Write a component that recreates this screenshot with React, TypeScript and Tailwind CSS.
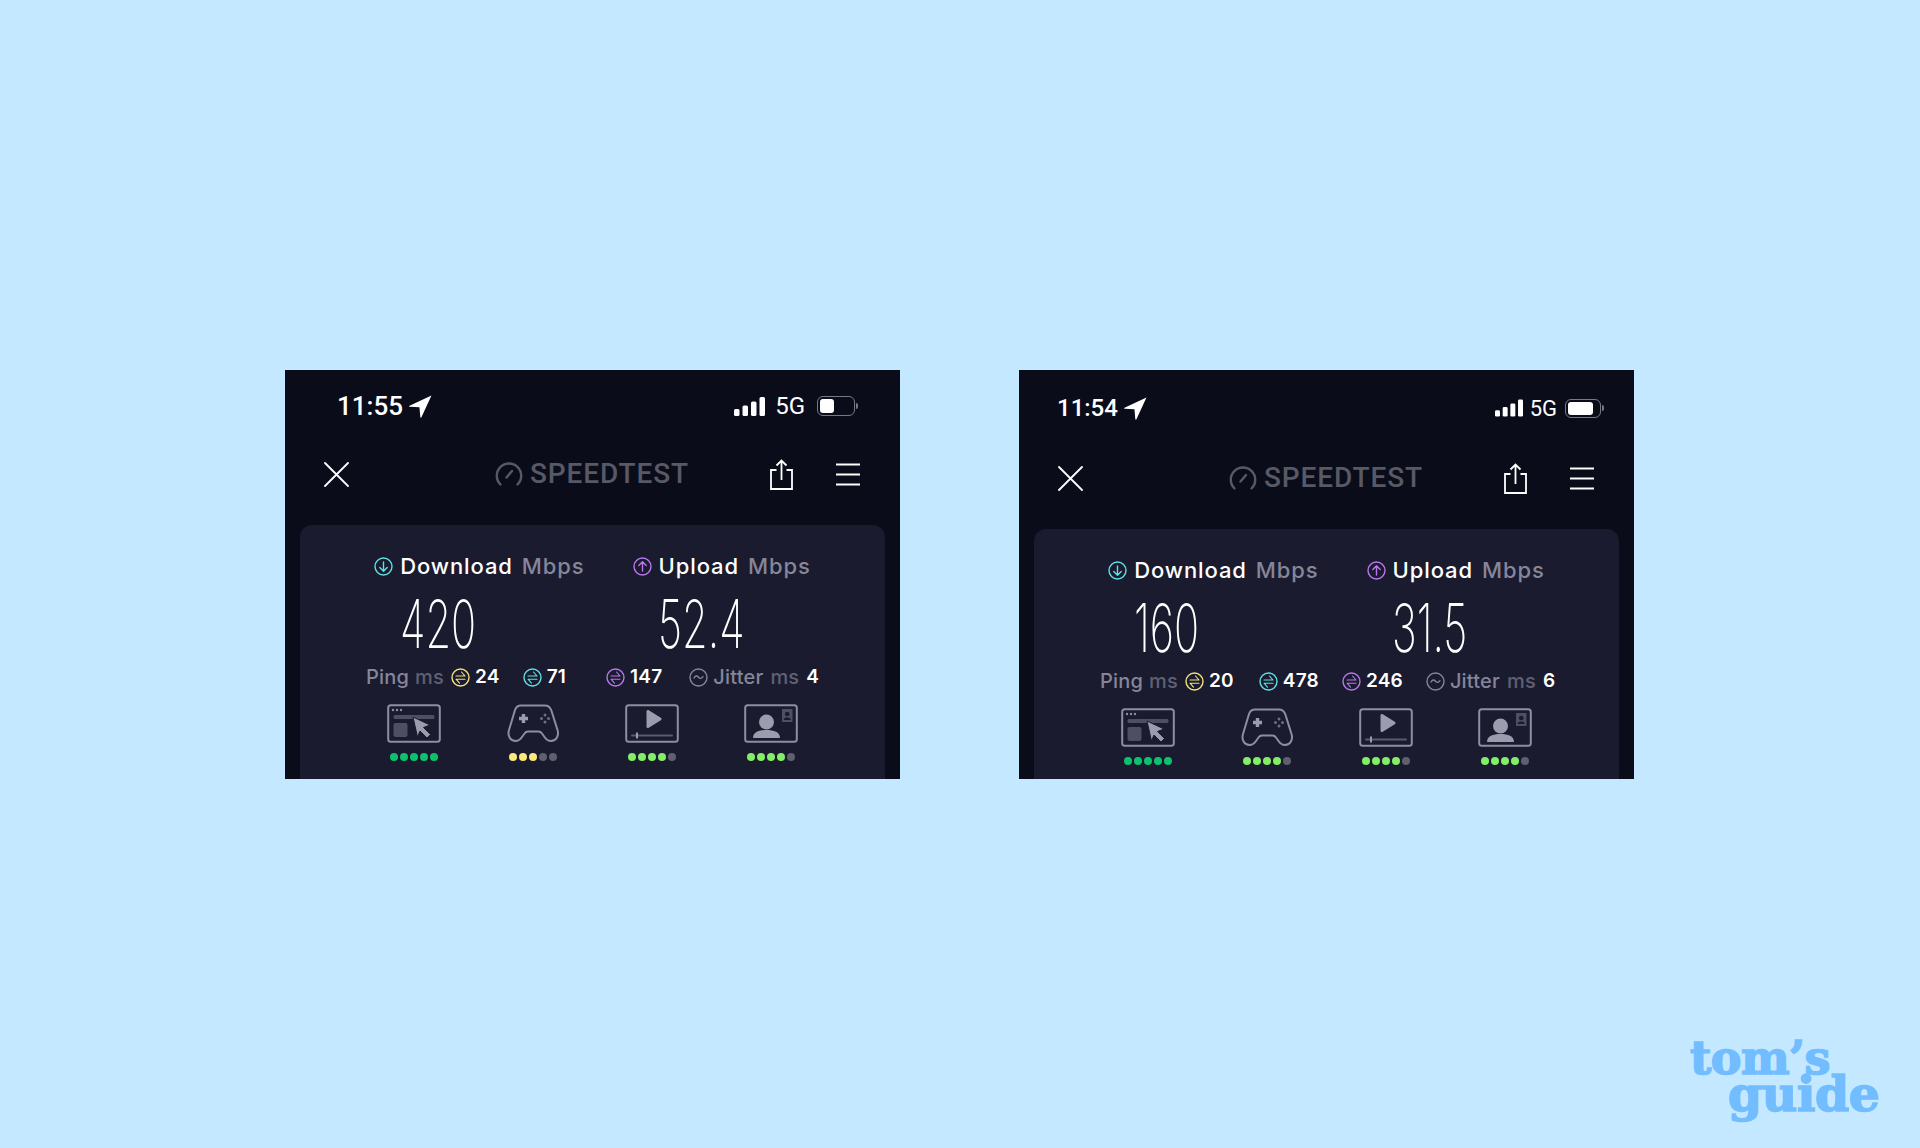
import type { ReactNode } from 'react'

const SANS = "[font-family:Inter,'Noto_Sans',sans-serif]"

type Reading = { icon: 'yellow' | 'cyan' | 'purple'; value: string; gap: string }

type Shot = {
  time: string
  timeClass: string
  statusHeight: string
  statusPad: string
  fiveG: string
  signal: [number, number]
  battery: { box: string; fill: string }
  down: string
  up: string
  readings: Reading[]
  jitter: string
  jitterGap: string
  ratings: { on: number; tone: string }[]
}

const SHOTS: Shot[] = [
  {
    time: '11:55',
    timeClass: 'text-[26px]',
    statusHeight: 'h-[72px]',
    statusPad: 'pl-[52px] pr-[42px]',
    fiveG: 'text-[24px] ml-[10px] mr-[12px]',
    signal: [31, 19],
    battery: { box: 'w-[38px] h-[20px]', fill: 'w-[14px]' },
    down: '420',
    up: '52.4',
    readings: [
      { icon: 'yellow', value: '24', gap: 'ml-[7px]' },
      { icon: 'cyan', value: '71', gap: 'ml-[23px]' },
      { icon: 'purple', value: '147', gap: 'ml-[40px]' },
    ],
    jitter: '4',
    jitterGap: 'ml-[27px]',
    ratings: [
      { on: 5, tone: 'bg-[#0dc26d]' },
      { on: 3, tone: 'bg-[#fbe87c]' },
      { on: 4, tone: 'bg-[#82ef66]' },
      { on: 4, tone: 'bg-[#82ef66]' },
    ],
  },
  {
    time: '11:54',
    timeClass: 'text-[24px]',
    statusHeight: 'h-[76px]',
    statusPad: 'pl-[38px] pr-[30px]',
    fiveG: 'text-[22px] ml-[7px] mr-[8px]',
    signal: [28, 18],
    battery: { box: 'w-[36px] h-[19px]', fill: 'w-[25px]' },
    down: '160',
    up: '31.5',
    readings: [
      { icon: 'yellow', value: '20', gap: 'ml-[7px]' },
      { icon: 'cyan', value: '478', gap: 'ml-[25px]' },
      { icon: 'purple', value: '246', gap: 'ml-[23px]' },
    ],
    jitter: '6',
    jitterGap: 'ml-[23px]',
    ratings: [
      { on: 5, tone: 'bg-[#0dc26d]' },
      { on: 4, tone: 'bg-[#82ef66]' },
      { on: 4, tone: 'bg-[#82ef66]' },
      { on: 4, tone: 'bg-[#82ef66]' },
    ],
  },
]

const TONES = { yellow: '#f4e27c', cyan: '#5ee0e4', purple: '#b877ed' }

function Ring({ color, children }: { color: string; children: ReactNode }) {
  return (
    <svg width="19" height="19" viewBox="0 0 19 19" fill="none" stroke={color} strokeWidth="1.4" strokeLinecap="round" strokeLinejoin="round" className="shrink-0">
      <circle cx="9.5" cy="9.5" r="8.5" />
      {children}
    </svg>
  )
}

function PingIcon({ color }: { color: string }) {
  return (
    <Ring color={color}>
      <path d="M5 8h9l-3.500-4M14 11.200H5l3.500 4" strokeWidth="1.100" />
    </Ring>
  )
}

function LocationArrow({ size }: { size: number }) {
  return (
    <svg width={size} height={size} viewBox="0 0 22 22" fill="#fff">
      <path d="M21.500.5.500 10.200c-.6.3-.4 1.100.2 1.100l9.300.5.800 9.300c.1.600.9.800 1.100.2z" />
    </svg>
  )
}

function Signal({ w, h }: { w: number; h: number }) {
  return (
    <svg width={w} height={h} viewBox="0 0 31 19" fill="#fff">
      <rect x="0" y="12" width="5.500" height="7" rx="1.500" />
      <rect x="8.500" y="8.500" width="5.500" height="10.500" rx="1.500" />
      <rect x="17" y="4.500" width="5.500" height="14.500" rx="1.500" />
      <rect x="25.500" y="0" width="5.500" height="19" rx="1.500" />
    </svg>
  )
}

function Speedometer() {
  return (
    <svg width="28" height="26" viewBox="0 0 28 26" fill="none" stroke="#575966" strokeWidth="2.400" strokeLinecap="round">
      <path d="M5.500 23.500A12.200 12.200 0 1 1 22.500 23.500" />
      <path d="M11.500 16.500 17 10" />
    </svg>
  )
}

function WebIcon() {
  return (
    <svg width="54" height="39" viewBox="0 0 54 39" fill="none">
      <rect x="1.200" y="1.200" width="51.600" height="36.600" rx="2.500" stroke="#8d8e9f" strokeWidth="2" />
      <circle cx="6" cy="6" r="1.200" fill="#8d8e9f" />
      <circle cx="10" cy="6" r="1.200" fill="#8d8e9f" />
      <circle cx="14" cy="6" r="1.200" fill="#8d8e9f" />
      <rect x="6.500" y="11" width="41" height="4" rx="1.500" fill="#4e4f62" />
      <rect x="6.500" y="19" width="14" height="14" rx="2" fill="#4e4f62" />
      <path d="M26 13 43 21l-6.500 2.500 7 7-3.500 3.500-7-7-2.500 6z" fill="#9b9cad" stroke="#1a1b2e" strokeWidth="1" />
    </svg>
  )
}

function GameIcon() {
  return (
    <svg width="54" height="39" viewBox="0 0 54 39" fill="none">
      <path
        d="M15 1.500h24c3 0 5 1.500 6.200 4.500l6.300 20c1.800 6-1.500 11-6.500 11-3 0-4.800-1.500-6.500-4l-2.500-3.500c-1-1.500-2-2-3.500-2H22c-1.500 0-2.500.5-3.500 2L16 33c-1.700 2.500-3.500 4-6.500 4-5 0-8.300-5-6.500-11L9 6c1-3 3-4.500 6-4.500z"
        stroke="#8d8e9f"
        strokeWidth="2"
      />
      <path d="M17.500 10v9M13 14.500h9" stroke="#9b9cad" strokeWidth="3.400" />
      <circle cx="39" cy="11" r="1.500" fill="#6d6e80" />
      <circle cx="39" cy="18" r="1.500" fill="#6d6e80" />
      <circle cx="35.500" cy="14.500" r="1.500" fill="#6d6e80" />
      <circle cx="42.500" cy="14.500" r="1.500" fill="#6d6e80" />
    </svg>
  )
}

function VideoIcon() {
  return (
    <svg width="54" height="39" viewBox="0 0 54 39" fill="none">
      <rect x="1.200" y="1.200" width="51.600" height="36.600" rx="2.500" stroke="#8d8e9f" strokeWidth="2" />
      <path d="M21.500 7.500v15c0 1.300 1.200 2 2.300 1.300l12-7.500c1-.6 1-2 0-2.600l-12-7.500c-1.100-.7-2.300 0-2.300 1.300z" fill="#9b9cad" />
      <path d="M7 31.500h40" stroke="#5a5b6e" strokeWidth="2" strokeLinecap="round" />
      <path d="M12 28.500v6" stroke="#9b9cad" strokeWidth="2" />
    </svg>
  )
}

function PersonIcon() {
  return (
    <svg width="54" height="39" viewBox="0 0 54 39" fill="none">
      <rect x="1.200" y="1.200" width="51.600" height="36.600" rx="2.500" stroke="#8d8e9f" strokeWidth="2" />
      <circle cx="22.500" cy="18" r="7.500" fill="#9b9cad" />
      <path d="M9 34c0-6 6-8 13.500-8S36 28 36 34z" fill="#9b9cad" />
      <rect x="38" y="5" width="10.500" height="13" fill="#4e4f62" />
      <circle cx="43.200" cy="10" r="2.300" fill="#1a1b2e" />
      <path d="M39.500 16c.5-2 2-2.500 3.700-2.500s3.200.5 3.700 2.500z" fill="#1a1b2e" />
    </svg>
  )
}

const APP_ICONS = [WebIcon, GameIcon, VideoIcon, PersonIcon]

function Panel({ shot }: { shot: Shot }) {
  return (
    <div className={`h-[409px] w-[615px] shrink-0 overflow-hidden bg-[#0a0c1a] text-white ${SANS}`}>
      {/* status bar */}
      <div className={`flex items-center justify-between ${shot.statusHeight} ${shot.statusPad}`}>
        <div className="flex items-center gap-[6px]">
          <span className={`font-medium [font-family:Roboto,sans-serif] ${shot.timeClass}`}>{shot.time}</span>
          <LocationArrow size={23} />
        </div>
        <div className="flex items-center">
          <Signal w={shot.signal[0]} h={shot.signal[1]} />
          <span className={`[font-family:Roboto,sans-serif] ${shot.fiveG}`}>5G</span>
          <div className={`flex items-center rounded-[6px] border border-[#77788a] p-[2px] ${shot.battery.box}`}>
            <div className={`h-full rounded-[3px] bg-white ${shot.battery.fill}`} />
          </div>
          <div className="ml-[1px] h-[6px] w-[2px] rounded-r-full bg-[#77788a]" />
        </div>
      </div>

      {/* nav */}
      <div className="flex h-16 items-center pl-[39px] pr-10">
        <svg width="25" height="25" viewBox="0 0 25 25" stroke="#fff" strokeWidth="1.800" strokeLinecap="round">
          <path d="M1 1l23 23M24 1 1 24" />
        </svg>
        <div className="ml-[146px] flex items-center gap-[7px]">
          <Speedometer />
          <span className="text-[28px] leading-none font-medium tracking-[0.9px] text-[#575966] [font-family:Roboto,sans-serif]">SPEEDTEST</span>
        </div>
        <svg className="ml-auto" width="23" height="31" viewBox="0 0 23 31" fill="none" stroke="#fff" strokeWidth="1.800">
          <path d="M6.500 11H1v19h21V11h-5.500M11.500 21V1.500M6.500 6.500l5-5 5 5" />
        </svg>
        <svg className="ml-[43px]" width="24" height="23" viewBox="0 0 24 23" stroke="#fff" strokeWidth="2.200">
          <path d="M0 1.500h24M0 11.500h24M0 21.500h24" />
        </svg>
      </div>

      {/* result card */}
      <div className="mx-[15px] mt-[19px] h-[300px] rounded-[12px] bg-[#1a1b2e] pt-[29px]">
        <div className="flex h-6 items-center justify-center gap-[48px] text-[22px] font-medium tracking-[0.9px]">
          <div className="flex items-center gap-[7px]">
            <Ring color={TONES.cyan}>
              <path d="M9.500 5v9M5.800 10.500l3.700 3.700 3.700-3.700" />
            </Ring>
            <span>Download</span>
            <span className="ml-[2px] text-[#85869a]">Mbps</span>
          </div>
          <div className="flex items-center gap-[7px]">
            <Ring color={TONES.purple}>
              <path d="M9.500 14V5M5.800 8.500l3.700-3.700 3.700 3.700" />
            </Ring>
            <span>Upload</span>
            <span className="ml-[2px] text-[#85869a]">Mbps</span>
          </div>
        </div>

        <div className="mt-[15px] flex h-[60px] items-center pl-[100px] text-[67px] leading-none font-extralight">
          <span className="w-[258px] origin-left scale-x-[0.62] whitespace-nowrap">{shot.down}</span>
          <span className="origin-left scale-x-[0.62] whitespace-nowrap">{shot.up}</span>
        </div>

        <div className="mt-[12px] flex h-6 items-center pl-[66px] text-[20px] font-medium tracking-[0.2px] whitespace-nowrap">
          <span className="text-[#85869a]">Ping</span>
          <span className="ml-[6px] text-[#5f6073]">ms</span>
          {shot.readings.map((r) => (
            <div key={r.icon} className={`flex items-center gap-[5px] ${r.gap}`}>
              <PingIcon color={TONES[r.icon]} />
              <span className="text-[19px] font-semibold">{r.value}</span>
            </div>
          ))}
          <div className={`flex items-center gap-[5px] ${shot.jitterGap}`}>
            <Ring color="#85869a">
              <path d="M5 10c1.300-2.500 3-2.500 4.500-.8s3.200 1.700 4.500-.7" />
            </Ring>
            <span className="text-[#85869a]">Jitter</span>
          </div>
          <span className="ml-[7px] text-[#5f6073]">ms</span>
          <span className="ml-[7px] text-[19px] font-semibold">{shot.jitter}</span>
        </div>

        <div className="mt-[15px] flex justify-center">
          {shot.ratings.map((rating, i) => {
            const Icon = APP_ICONS[i]
            return (
              <div key={i} className="flex w-[119px] flex-col items-center">
                <Icon />
                <div className="mt-[10px] flex gap-[2px]">
                  {[0, 1, 2, 3, 4].map((d) => (
                    <span key={d} className={`h-2 w-2 rounded-full ${d < rating.on ? rating.tone : 'bg-[#5f606f]'}`} />
                  ))}
                </div>
              </div>
            )
          })}
        </div>
      </div>
    </div>
  )
}

export default function App() {
  return (
    <div className="relative h-[1148px] w-[1920px] overflow-hidden bg-[#c4e8ff]">
      <div className="flex gap-[119px] pt-[370px] pl-[285px]">
        {SHOTS.map((shot) => (
          <Panel key={shot.time} shot={shot} />
        ))}
      </div>
      {/* watermark */}
      <div className="absolute top-[1040px] left-[1690px] text-[46px] leading-[36px] font-bold tracking-[-0.5px] text-[#72bdff] [-webkit-text-stroke:1.6px_#72bdff] [font-family:'DejaVu_Serif',serif]">
        <div>tom’s</div>
        <div className="pl-[38px] text-[49px]">guide</div>
      </div>
    </div>
  )
}
